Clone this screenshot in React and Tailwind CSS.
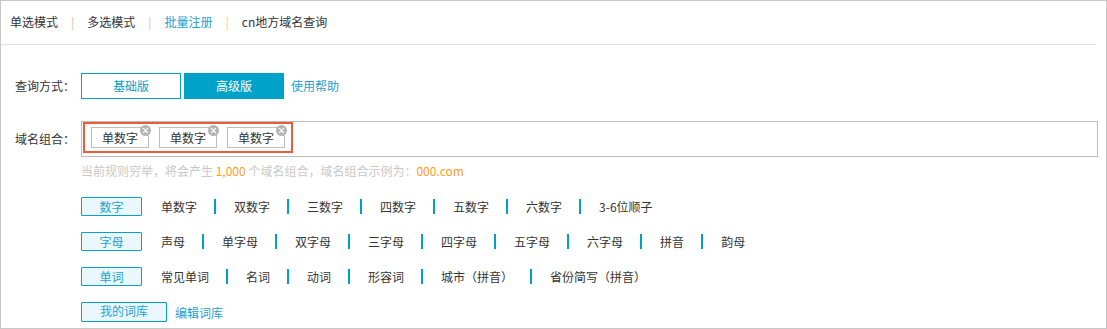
import React from 'react';

const rows = [
  { name: '数字', items: ['单数字', '双数字', '三数字', '四数字', '五数字', '六数字', '3-6位顺子'] },
  { name: '字母', items: ['声母', '单字母', '双字母', '三字母', '四字母', '五字母', '六字母', '拼音', '韵母'] },
  { name: '单词', items: ['常见单词', '名词', '动词', '形容词', '城市（拼音）', '省份简写（拼音）'] },
];

const navItems = [
  { name: '单选模式' },
  { name: '多选模式' },
  { name: '批量注册', active: true },
  { name: 'cn地方域名查询' },
];

function Tag({ label }) {
  return (
    <div className="relative w-[58px] h-[21px] border border-[#bdbdbd] flex items-center justify-center text-[12px] text-[#333] bg-white">
      {label}
      {/* close dot */}
      <span className="absolute -top-[3px] -right-[3px] w-[11px] h-[11px] rounded-full bg-[#b4b4b4] flex items-center justify-center">
        <svg viewBox="0 0 10 10" className="w-[7px] h-[7px]">
          <path d="M2 2 L8 8 M8 2 L2 8" stroke="#fff" strokeWidth="1.8" strokeLinecap="round" />
        </svg>
      </span>
    </div>
  );
}

export default function App() {
  return (
    <div
      className="w-[1107px] h-[329px] border border-[#c8c8c8] bg-white text-[12px] text-[#333] overflow-hidden"
      style={{ fontFamily: '"Noto Sans CJK SC", "Liberation Sans", sans-serif' }}
    >
      {/* Top tabs */}
      <div className="h-[44px] mr-[10px] border-b border-[#e3e3e3] flex items-center pl-[9px] pb-[2px]">
        {navItems.map((item, i) => (
          <div key={item.name} className="flex items-center">
            {i > 0 && <span className="mx-[13px] text-[#d9c3a5]">|</span>}
            <span className={item.active ? 'text-[#1aa3cf]' : 'text-[#333]'}>{item.name}</span>
          </div>
        ))}
      </div>

      {/* Query mode */}
      <div className="flex items-center mt-[28px]">
        <div className="w-[80px] pl-[14px]">查询方式：</div>
        <button className="w-[100px] h-[26px] border border-[#00a2ca] text-[#00a2ca] bg-white flex items-center justify-center">基础版</button>
        <button className="ml-[3px] w-[100px] h-[26px] bg-[#00a2ca] text-white flex items-center justify-center">高级版</button>
        <a className="ml-[7px] text-[#1aa3cf]">使用帮助</a>
      </div>

      {/* Domain combination */}
      <div className="flex items-center mt-[22px]">
        <div className="w-[80px] pl-[14px]">域名组合：</div>
        <div className="w-[1017px] h-[36px] border border-[#bcbcbc] pl-[1px] pt-[0px]">
          <div className="w-[210px] h-[31px] border-2 border-[#ec5b3e] flex items-center gap-[10px] pl-[6px]">
            <Tag label="单数字" />
            <Tag label="单数字" />
            <Tag label="单数字" />
          </div>
        </div>
      </div>

      <div className="pl-[80px] mt-[5px] leading-[18px] text-[#c8c8c8]">
        当前规则穷举，将会产生 <span className="text-[#ff9c1a]">1,000</span> 个域名组合，域名组合示例为：<span className="text-[#ff9c1a]">000.com</span>
      </div>

      {/* Categories */}
      <div className="pl-[80px] mt-[17px] flex flex-col gap-[16px]">
        {rows.map((row) => (
          <div key={row.name} className="flex items-center h-[19px]">
            <div className="w-[61px] h-[19px] border border-[#00a2ca] bg-[#eaf8fe] text-[#1aa3cf] flex items-center justify-center rounded-[1px]">
              {row.name}
            </div>
            <div className="flex items-center ml-[19px]">
              {row.items.map((it, i) => (
                <div key={it} className="flex items-center">
                  {i > 0 && <span className="w-[2px] h-[15px] bg-[#00a2ca] ml-[17px] mr-[18px]" />}
                  <span>{it}</span>
                </div>
              ))}
            </div>
          </div>
        ))}
        <div className="flex items-center h-[19px]">
          <div className="w-[86px] h-[20px] border border-[#00a2ca] bg-[#eaf8fe] text-[#1aa3cf] flex items-center justify-center pb-[2px] rounded-[1px]">
            我的词库
          </div>
          <a className="ml-[8px] mt-[3px] text-[#1aa3cf]">编辑词库</a>
        </div>
      </div>
    </div>
  );
}
